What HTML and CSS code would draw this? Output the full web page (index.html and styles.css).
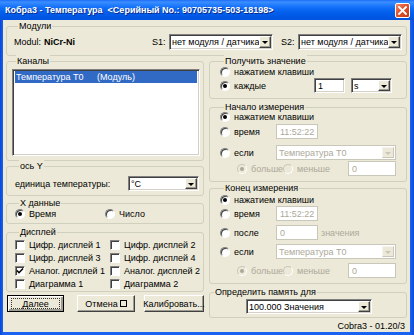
FILE: index.html
```html
<!DOCTYPE html>
<html lang="ru">
<head>
<meta charset="utf-8">
<title>Кобра3 - Температура</title>
<link rel="stylesheet" href="styles.css">
</head>
<body>
<div class="window">
  <div class="titlebar">
    <span class="title">Кобра3 - Температура  &lt;Серийный No.: 90705735-503-18198&gt;</span>
    <span class="close"><svg width="9" height="9" viewBox="0 0 9 9"><path d="M1 1L8 8M8 1L1 8" stroke="#fff" stroke-width="1.8" stroke-linecap="square"/></svg></span>
  </div>
  <div class="client">
    <div class="group g-modules">
      <div class="legend">Модули</div>
      <div class="mod-row">
        <span class="mod-label">Modul:</span>
        <span class="mod-name">NiCr-Ni</span>
        <span class="s-label s1">S1:</span>
        <div class="select w-mod"><span class="val">нет модуля / датчика</span><span class="arrow"></span></div>
        <span class="s-label s2">S2:</span>
        <div class="select w-mod"><span class="val">нет модуля / датчика</span><span class="arrow"></span></div>
      </div>
    </div>
    <div class="columns">
      <div class="col">
        <div class="group g-channels">
          <div class="legend">Каналы</div>
          <div class="listbox">
            <div class="item selected"><span class="c1">Температура T0</span><span>(Модуль)</span></div>
          </div>
        </div>
        <div class="group g-axis">
          <div class="legend">ось Y</div>
          <div class="axis-row">
            <span class="axis-label">единица температуры:</span>
            <div class="select w-unit"><span class="val">°C</span><span class="arrow"></span></div>
          </div>
        </div>
        <div class="group g-x">
          <div class="legend">X данные</div>
          <div class="x-row">
            <span class="opt x-opt"><span class="radio on"></span>Время</span>
            <span class="opt"><span class="radio"></span>Число</span>
          </div>
        </div>
        <div class="group g-display">
          <div class="legend">Дисплей</div>
          <div class="checks">
            <span class="opt"><span class="check"></span>Цифр. дисплей 1</span>
            <span class="opt"><span class="check"></span>Цифр. дисплей 2</span>
            <span class="opt"><span class="check"></span>Цифр. дисплей 3</span>
            <span class="opt"><span class="check"></span>Цифр. дисплей 4</span>
            <span class="opt"><span class="check"><svg width="8" height="8" viewBox="0 0 8 8"><path d="M1 3.5L3 5.7L7 1.5" fill="none" stroke="#000" stroke-width="1.6"/></svg></span>Аналог. дисплей 1</span>
            <span class="opt"><span class="check"></span>Аналог. дисплей 2</span>
            <span class="opt"><span class="check"></span>Диаграмма 1</span>
            <span class="opt"><span class="check"></span>Диаграмма 2</span>
          </div>
        </div>
        <div class="buttons">
          <button class="btn btn-default b-next"><span class="focus">Далее</span></button>
          <button class="btn b-cancel">Отмена<span class="tofu"></span></button>
          <button class="btn b-calib">Калибровать...</button>
        </div>
      </div>
      <div class="col">
        <div class="group g-get">
          <div class="legend">Получить значение</div>
          <div class="opt r1 m-get1"><span class="radio"></span>нажатием клавиши</div>
          <div class="opt r2 m-get2"><span class="radio on"></span><span class="lbl lbl-every">каждые</span>
            <div class="edit w-num">1</div>
            <div class="select w-s"><span class="val">s</span><span class="arrow"></span></div>
          </div>
        </div>
        <div class="group g-start">
          <div class="legend">Начало измерения</div>
          <div class="opt r1 m-s1"><span class="radio on"></span>нажатием клавиши</div>
          <div class="opt r2 m-s2"><span class="radio"></span><span class="lbl">время</span><div class="edit w-time dis">11:52:22</div></div>
          <div class="opt r2 m-s3"><span class="radio"></span><span class="lbl">если</span><div class="select w-ch dis"><span class="val">Температура T0</span><span class="arrow"></span></div></div>
          <div class="opt r2 sub m-s4"><span class="radio on dis"></span><span class="lbl-b dis-t">больше</span><span class="radio dis"></span><span class="lbl-m dis-t">меньше</span><div class="edit w-cmp dis">0</div></div>
        </div>
        <div class="group g-end">
          <div class="legend">Конец измерения</div>
          <div class="opt r1 m-e1"><span class="radio on"></span>нажатием клавиши</div>
          <div class="opt r2 m-e2"><span class="radio"></span><span class="lbl">время</span><div class="edit w-time dis">11:52:22</div></div>
          <div class="opt r2 m-e3"><span class="radio"></span><span class="lbl">после</span><div class="edit w-time dis">0</div><span class="dis-t after">значения</span></div>
          <div class="opt r2 m-e4"><span class="radio"></span><span class="lbl">если</span><div class="select w-ch dis"><span class="val">Температура T0</span><span class="arrow"></span></div></div>
          <div class="opt r2 sub m-e5"><span class="radio on dis"></span><span class="lbl-b dis-t">больше</span><span class="radio dis"></span><span class="lbl-m dis-t">меньше</span><div class="edit w-cmp dis">0</div></div>
        </div>
        <div class="group g-mem">
          <div class="legend">Определить память для</div>
          <div class="select w-mem"><span class="val">100.000 Значения</span><span class="arrow"></span></div>
        </div>
        <div class="version">Cobra3 - 01.20/3</div>
      </div>
    </div>
  </div>
</div>
</body>
</html>
```

FILE: styles.css
```css
* { box-sizing: border-box; }
body {
  margin: 0;
  font-family: "Liberation Sans", Arial, sans-serif;
  font-size: 9px;
  color: #000;
  background: #fff;
}
.window {
  width: 414px;
  height: 335px;
  display: flex;
  flex-direction: column;
  background: linear-gradient(90deg, #0846D8 0, #1A62F0 3px, #1A62F0 410px, #0B4CD8 414px);
}
.titlebar {
  height: 20px;
  flex: none;
  display: flex;
  align-items: center;
  padding: 0 4px 0 5px;
  background: linear-gradient(#1C6CF8 0%, #3C8EFF 10%, #2A83FF 20%, #0F6CF6 40%, #0461EC 60%, #0058E6 80%, #0053DE 100%);
}
.title {
  color: #fff;
  font-weight: bold;
  font-size: 9px;
  white-space: pre;
  text-shadow: 1px 1px 0 #0A2A8A;
}
.close {
  margin-left: auto;
  width: 15px;
  height: 15px;
  border: 1px solid #fff;
  border-radius: 2px;
  background: linear-gradient(135deg, #F08A6A 0%, #E0532E 45%, #C83A18 100%);
  display: flex;
  align-items: center;
  justify-content: center;
}
.client {
  flex: 1;
  margin: 0 4px 3px 3px;
  padding: 0 3px;
  background: #ECE9D8;
}
.group {
  border: 1px solid #D0D0BF;
  border-radius: 3px;
}
.legend {
  margin: -7px 0 0 4px;
  padding: 0 1px;
  line-height: 12px;
  height: 12px;
  width: max-content;
  background: #ECE9D8;
}
.g-modules { margin-top: 6px; height: 30px; padding: 0 4px 0 7px; }
.mod-row { display: flex; align-items: center; margin-top: 2px; height: 16px; }
.mod-label { width: 30px; }
.mod-name { font-weight: bold; }
.s-label { width: 17px; }
.s1 { margin-left: auto; }
.s2 { margin-left: 8px; }

.columns { display: flex; gap: 5px; }
.col { width: 198px; display: flex; flex-direction: column; }

/* select / edit */
.select, .edit {
  height: 15px;
  background: #fff;
  border: 1px solid;
  border-color: #808080 #fff #fff #808080;
  box-shadow: inset 1px 1px 0 #404040, inset -1px -1px 0 #D4D0C8;
  display: flex;
  align-items: center;
  flex: none;
}
.select .val { flex: 1; padding-left: 2px; white-space: nowrap; overflow: hidden; }
.edit { padding-left: 3px; }
.arrow {
  width: 12px;
  height: 11px;
  margin-right: 1px;
  background: #ECE9D8;
  border: 1px solid;
  border-color: #fff #404040 #404040 #fff;
  box-shadow: inset -1px -1px 0 #9D9D92;
  display: flex;
  align-items: center;
  justify-content: center;
}
.arrow::after {
  content: "";
  border-left: 3px solid transparent;
  border-right: 3px solid transparent;
  border-top: 3px solid #000;
  margin-top: 1px;
}
.select.w-mod { width: 104px; height: 16px; }
.select.w-mod .arrow { height: 12px; }
.w-unit { width: 71px; }
.w-num { width: 31px; }
.w-s { width: 41px; margin-left: 6px; }
.w-time { width: 42px; }
.w-ch { width: 120px; }
.w-cmp { width: 48px; margin-left: auto; margin-right: 10px; }
.w-mem { width: 126px; margin: 1px 0 0 36px; }
.dis { color: #ACA899; }
.edit.dis, .select.dis {
  border: 1px solid #C9C7BA;
  box-shadow: none;
}
.select.dis .arrow { border-color: #F4F3EE #C9C7BA #C9C7BA #F4F3EE; box-shadow: none; }
.select.dis .arrow::after { border-top-color: #C9C7BA; }
.dis-t { color: #ACA899; }

/* channels */
.g-channels { margin-top: 5px; height: 100px; padding: 0 3px 0 5px; }
.listbox {
  margin-top: 2px;
  height: 87px;
  width: 188px;
  background: #fff;
  border: 1px solid;
  border-color: #808080 #fff #fff #808080;
  box-shadow: inset 1px 1px 0 #404040, inset -1px -1px 0 #D4D0C8;
  padding: 1px 2px;
}
.item { height: 12px; line-height: 12px; display: flex; padding-left: 1px; }
.item.selected { background: #316AC5; color: #fff; }
.c1 { width: 81px; }

.g-axis { margin-top: 5px; height: 30px; padding: 0 4px 0 8px; }
.axis-row { display: flex; align-items: center; margin-top: 4px; height: 15px; }
.axis-label { width: 113px; }

.g-x { margin-top: 7px; height: 21px; padding: 0 4px 0 8px; }
.x-row { display: flex; margin-top: -1px; height: 11px; align-items: center; }
.x-opt { width: 90px; }

.g-display { margin-top: 8px; height: 60px; padding: 0 4px 0 8px; }
.checks { display: grid; grid-template-columns: 95px 1fr; grid-auto-rows: 13px; align-items: center; }

.opt { display: flex; align-items: center; white-space: nowrap; }
.radio {
  width: 10px;
  height: 10px;
  border-radius: 50%;
  background: #fff;
  border: 1px solid;
  border-color: #808080 #fff #fff #808080;
  box-shadow: inset 1px 1px 0 #404040;
  margin-right: 4px;
  flex: none;
  display: flex;
  align-items: center;
  justify-content: center;
}
.radio.on::after {
  content: "";
  width: 4px;
  height: 4px;
  border-radius: 50%;
  background: #000;
}
.radio.dis { background: #ECE9D8; box-shadow: none; border-color: #C9C7BA #fff #fff #C9C7BA; }
.radio.dis.on::after { background: #ACA899; }
.check {
  width: 10px;
  height: 10px;
  background: #fff;
  border: 1px solid;
  border-color: #808080 #fff #fff #808080;
  box-shadow: inset 1px 1px 0 #404040;
  margin-right: 4px;
  flex: none;
  display: flex;
  align-items: center;
  justify-content: center;
}

/* buttons */
.buttons { display: flex; margin-top: 3px; height: 17px; }
.btn {
  font: inherit;
  height: 17px;
  padding: 0;
  background: #ECE9D8;
  border: 1px solid;
  border-color: #fff #404040 #404040 #fff;
  box-shadow: inset -1px -1px 0 #9D9D92;
  color: #000;
  display: flex;
  align-items: center;
  justify-content: center;
}
.btn-default { border: 1px solid #000; box-shadow: inset 1px 1px 0 #fff, inset -2px -2px 0 #9D9D92; }
.focus {
  width: calc(100% - 6px);
  height: 11px;
  border: 1px dotted #333;
  display: flex;
  align-items: center;
  justify-content: center;
}
.b-next { width: 57px; margin-left: 1px; }
.b-cancel { width: 58px; margin-left: 13px; }
.b-calib { width: 60px; margin-left: 9px; }
.tofu { width: 7px; height: 7px; border: 1px solid #000; margin-left: 2px; }

/* right column */
.g-get { margin-top: 5px; height: 38px; padding: 0 0 0 10px; }
.g-start { margin-top: 8px; height: 75px; padding: 0 0 0 10px; }
.g-end { margin-top: 6px; height: 96px; padding: 0 0 0 10px; }
.g-mem { margin-top: 8px; height: 26px; }
.r1 { height: 11px; }
.r2 { height: 15px; }
.lbl { width: 42px; }
.lbl-every { width: 80px; }
.lbl-b { width: 32px; }
.lbl-m { width: 40px; }
.sub { padding-left: 17px; }
.after { margin-left: 3px; }
.m-get1 { margin-top: -1px; }
.m-get2 { margin-top: 1px; }
.m-s1 { margin-top: -2px; }
.m-s2 { margin-top: 2px; }
.m-s3 { margin-top: 6px; }
.m-s4 { margin-top: 1px; }
.m-e1 { margin-top: 0; }
.m-e2 { margin-top: 1px; }
.m-e3 { margin-top: 4px; }
.m-e4 { margin-top: 4px; }
.m-e5 { margin-top: 4px; }
.version { margin-top: 2px; line-height: 12px; text-align: right; padding-right: 2px; }
```
